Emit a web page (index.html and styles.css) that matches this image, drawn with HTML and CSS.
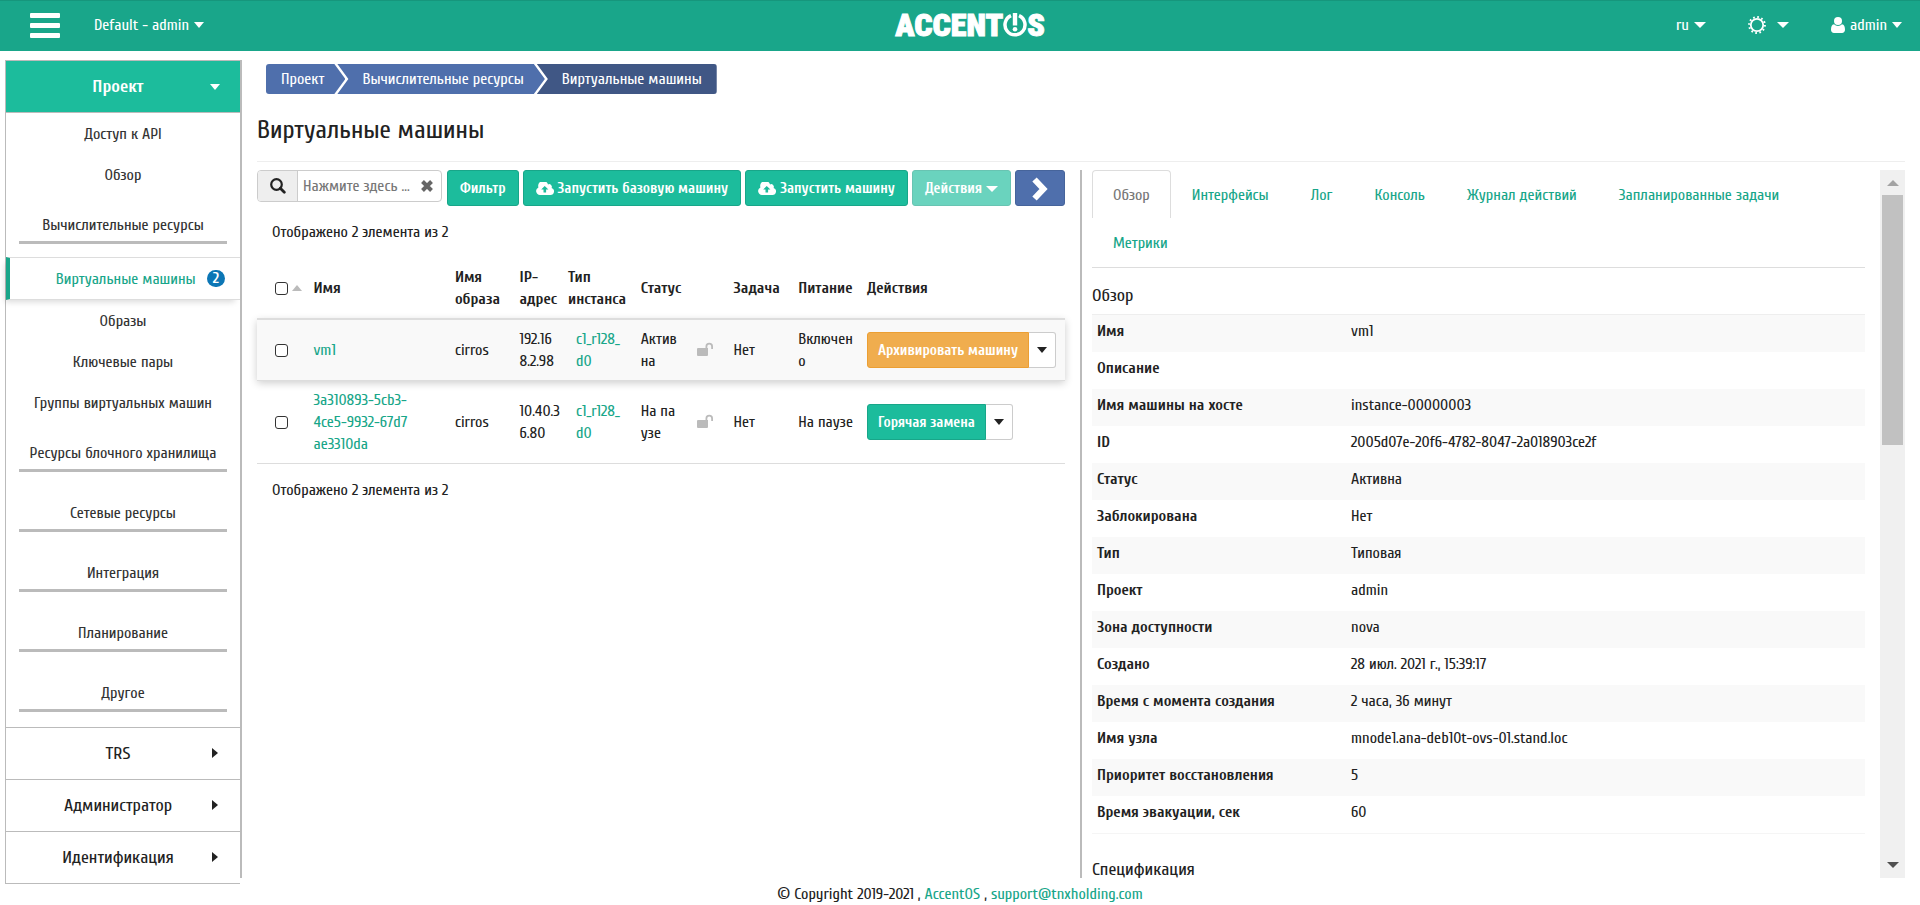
FILE: index.html
```
<!DOCTYPE html>
<html lang="ru">
<head>
    <meta charset="UTF-8">
    <meta name="viewport" content="width=device-width, initial-scale=1.0">
    <title>Виртуальные машины - AccentOS</title>
    <link rel="stylesheet" href="styles.css">
</head>
<body>
    <svg class="sprite" aria-hidden="true">
        <symbol id="cloud" viewBox="0 0 18 13">
            <path fill="currentColor" fill-rule="evenodd" d="M4 13a4 4 0 0 1-1.6-7.6A5 5 0 0 1 12 2.400a2.7 2.7 0 0 1 3.6 3.6A3.600 3.600 0 0 1 14.400 13zM8.700 4L5.200 7.600h2.300v3h2.600v-3h2.300z"/>
        </symbol>
        <symbol id="unlock" viewBox="0 0 16 14">
            <path fill="currentColor" d="M1 6h7.500V4.500a3.700 3.700 0 0 1 7.500 0V7h-1.800V4.500a1.900 1.900 0 0 0-3.900 0V6h.7v7a1 1 0 0 1-1 1H1a1 1 0 0 1-1-1V7a1 1 0 0 1 1-1z"/>
        </symbol>
    </svg>

    <header class="topbar">
        <div class="topbar-left">
            <button class="burger" aria-label="Меню"><span></span><span></span><span></span></button>
            <button class="top-link">Default - admin <i class="caret"></i></button>
        </div>
        <a class="logo" href="#" aria-label="AccentOS">ACCENT<svg width="24" height="24" viewBox="0 0 24 24">
            <path fill="none" stroke="#fff" stroke-width="3.500" d="M8 2.700a10 10 0 1 0 8 0"/>
            <path fill="#fff" d="M9.800 0h4.400v12.500H9.800z"/>
            <circle cx="12" cy="16.300" r="2.300" fill="#fff"/>
        </svg>S</a>
        <div class="topbar-right">
            <button class="top-link">ru <i class="caret caret-lg"></i></button>
            <button class="top-link top-theme" aria-label="Тема">
                <svg width="18" height="18" viewBox="0 0 18 18" fill="none" stroke="#fff">
                    <circle cx="9" cy="9" r="6.200" stroke-width="1.800"/>
                    <circle cx="9" cy="9" r="7.900" stroke-width="2" stroke-dasharray="1.700 2.436"/>
                </svg>
                <i class="caret caret-lg"></i>
            </button>
            <button class="top-link">
                <svg width="14" height="16" viewBox="0 0 14 16" fill="#fff">
                    <circle cx="7" cy="4" r="4"/>
                    <path d="M3 7.200a5.400 5.400 0 0 0 8 0c2.200.3 3 2.500 3 5.600 0 2-1.200 3.200-3 3.200H3c-1.800 0-3-1.200-3-3.200 0-3.100.8-5.300 3-5.600z"/>
                </svg>
                admin <i class="caret"></i>
            </button>
        </div>
    </header>

    <div class="page">
        <nav class="sidebar">
            <div class="panel">
                <button class="panel-title open">Проект <i class="caret"></i></button>
                <div class="panel-body">
                    <a class="item" href="#">Доступ к API</a>
                    <a class="item" href="#">Обзор</a>
                    <button class="group">Вычислительные ресурсы</button>
                    <div class="group-list">
                        <a class="item active" href="#">Виртуальные машины <span class="badge">2</span></a>
                        <a class="item" href="#">Образы</a>
                        <a class="item" href="#">Ключевые пары</a>
                        <a class="item" href="#">Группы виртуальных машин</a>
                    </div>
                    <button class="group">Ресурсы блочного хранилища</button>
                    <button class="group">Сетевые ресурсы</button>
                    <button class="group">Интеграция</button>
                    <button class="group">Планирование</button>
                    <button class="group">Другое</button>
                </div>
                <button class="panel-title">TRS <i class="caret-right"></i></button>
                <button class="panel-title">Администратор <i class="caret-right"></i></button>
                <button class="panel-title">Идентификация <i class="caret-right"></i></button>
            </div>
        </nav>

        <main class="content">
            <nav class="breadcrumb">
                <a href="#">Проект</a>
                <a href="#">Вычислительные ресурсы</a>
                <a class="current" href="#">Виртуальные машины</a>
            </nav>
            <h1>Виртуальные машины</h1>

            <div class="columns">
                <section class="list">
                    <div class="toolbar">
                        <div class="search">
                            <label for="search" aria-label="Поиск">
                                <svg width="16" height="16" viewBox="0 0 16 16" fill="none" stroke="#222">
                                    <circle cx="6.500" cy="6.500" r="5.300" stroke-width="2.200"/>
                                    <path d="M10.300 10.300l4 4" stroke-width="2.800" stroke-linecap="round"/>
                                </svg>
                            </label>
                            <input id="search" type="text" placeholder="Нажмите здесь ...">
                            <button class="clear" aria-label="Очистить">
                                <svg width="12" height="12" viewBox="0 0 12 12"><path d="M1.500 1.500l9 9M10.500 1.500l-9 9" stroke="#666" stroke-width="4"/></svg>
                            </button>
                        </div>
                        <button class="btn">Фильтр</button>
                        <button class="btn"><svg width="18" height="13"><use href="#cloud"/></svg> Запустить базовую машину</button>
                        <button class="btn"><svg width="18" height="13"><use href="#cloud"/></svg> Запустить машину</button>
                        <button class="btn" disabled>Действия <i class="caret caret-lg"></i></button>
                        <button class="btn btn-next" aria-label="Свернуть">
                            <svg width="16" height="24" viewBox="0 0 16 24"><path d="M2.500 2.500l9 9.500-9 9.500" fill="none" stroke="#fff" stroke-width="6"/></svg>
                        </button>
                    </div>
                    <p class="count">Отображено 2 элемента из 2</p>
                    <table class="instances">
                        <colgroup>
                            <col class="c-check"><col class="c-name"><col class="c-image"><col class="c-ip"><col class="c-type">
                            <col class="c-status"><col class="c-lock"><col class="c-task"><col class="c-power"><col class="c-actions">
                        </colgroup>
                        <thead>
                            <tr>
                                <th class="check"><input type="checkbox" aria-label="Выбрать все"><i class="sort"></i></th>
                                <th>Имя</th>
                                <th>Имя образа</th>
                                <th>IP-<br>адрес</th>
                                <th>Тип инстанса</th>
                                <th>Статус</th>
                                <th></th>
                                <th>Задача</th>
                                <th>Питание</th>
                                <th>Действия</th>
                            </tr>
                        </thead>
                        <tbody>
                            <tr class="selected">
                                <td class="check"><input type="checkbox" aria-label="vm1"></td>
                                <td><a href="#">vm1</a></td>
                                <td>cirros</td>
                                <td>192.16<br>8.2.98</td>
                                <td class="type"><a href="#">c1_r128_<br>d0</a></td>
                                <td>Актив<br>на</td>
                                <td class="lock"><svg width="16" height="14"><use href="#unlock"/></svg></td>
                                <td>Нет</td>
                                <td>Включен<br>о</td>
                                <td><div class="split"><button class="btn btn-warning">Архивировать машину</button><button class="btn btn-more" aria-label="Ещё"><i class="caret"></i></button></div></td>
                            </tr>
                            <tr>
                                <td class="check"><input type="checkbox" aria-label="3a310893-5cb3-4ce5-9932-67d7ae3310da"></td>
                                <td><a href="#">3a310893-5cb3-<br>4ce5-9932-67d7<br>ae3310da</a></td>
                                <td>cirros</td>
                                <td>10.40.3<br>6.80</td>
                                <td class="type"><a href="#">c1_r128_<br>d0</a></td>
                                <td>На па<br>узе</td>
                                <td class="lock"><svg width="16" height="14"><use href="#unlock"/></svg></td>
                                <td>Нет</td>
                                <td>На паузе</td>
                                <td><div class="split"><button class="btn">Горячая замена</button><button class="btn btn-more" aria-label="Ещё"><i class="caret"></i></button></div></td>
                            </tr>
                        </tbody>
                    </table>
                    <p class="count">Отображено 2 элемента из 2</p>
                </section>

                <section class="details">
                    <div class="details-body">
                        <nav class="tabs">
                            <a class="active" href="#">Обзор</a>
                            <a href="#">Интерфейсы</a>
                            <a href="#">Лог</a>
                            <a href="#">Консоль</a>
                            <a href="#">Журнал действий</a>
                            <a href="#">Запланированные задачи</a>
                            <a href="#">Метрики</a>
                        </nav>
                        <h2>Обзор</h2>
                        <dl>
                            <div><dt>Имя</dt><dd>vm1</dd></div>
                            <div><dt>Описание</dt><dd></dd></div>
                            <div><dt>Имя машины на хосте</dt><dd>instance-00000003</dd></div>
                            <div><dt>ID</dt><dd>2005d07e-20f6-4782-8047-2a018903ce2f</dd></div>
                            <div><dt>Статус</dt><dd>Активна</dd></div>
                            <div><dt>Заблокирована</dt><dd>Нет</dd></div>
                            <div><dt>Тип</dt><dd>Типовая</dd></div>
                            <div><dt>Проект</dt><dd>admin</dd></div>
                            <div><dt>Зона доступности</dt><dd>nova</dd></div>
                            <div><dt>Создано</dt><dd>28 июл. 2021 г., 15:39:17</dd></div>
                            <div><dt>Время с момента создания</dt><dd>2 часа, 36 минут</dd></div>
                            <div><dt>Имя узла</dt><dd>mnode1.ana-deb10t-ovs-01.stand.loc</dd></div>
                            <div><dt>Приоритет восстановления</dt><dd>5</dd></div>
                            <div><dt>Время эвакуации, сек</dt><dd>60</dd></div>
                        </dl>
                        <h2>Спецификация</h2>
                    </div>
                    <div class="scrollbar" aria-hidden="true">
                        <i class="arrow-up"></i>
                        <div class="track"><div class="thumb"></div></div>
                        <i class="arrow-down"></i>
                    </div>
                </section>
            </div>
        </main>
    </div>

    <footer>© Copyright 2019-2021 , <a href="#">AccentOS</a> , <a href="#">support@tnxholding.com</a></footer>
</body>
</html>
```
FILE: styles.css
```
* {
    box-sizing: border-box;
}
body {
    margin: 0;
    height: 100vh;
    display: flex;
    flex-direction: column;
    overflow: hidden;
    font-family: Cuprum, 'Roboto Condensed', Roboto, sans-serif;
    font-size: 16px;
    line-height: 22px;
    color: #222;
    background: #fff;
}
a {
    color: #18a689;
    text-decoration: none;
}
button {
    font: inherit;
    color: inherit;
    background: none;
    border: none;
    padding: 0;
    cursor: pointer;
}
.sprite {
    display: none;
}
.caret {
    display: inline-block;
    border: 5px solid transparent;
    border-top: 6px solid;
    border-bottom: 0;
    vertical-align: 2px;
}
.caret-lg {
    border-left-width: 6px;
    border-right-width: 6px;
}
.caret-right {
    display: inline-block;
    border: 5px solid transparent;
    border-left: 6px solid;
    border-right: 0;
}

/* header */
.topbar {
    flex: none;
    height: 51px;
    display: flex;
    align-items: center;
    justify-content: space-between;
    padding: 0 18px 2px 30px;
    background: #19a68a;
    border-top: 1px solid #16967c;
    color: #fff;
}
.topbar-left, .topbar-right {
    flex: 1;
    display: flex;
    align-items: center;
}
.topbar-right {
    justify-content: flex-end;
    gap: 42px;
}
.topbar-left {
    gap: 34px;
}
.burger {
    display: flex;
    flex-direction: column;
    gap: 5px;
    width: 30px;
}
.burger span {
    height: 5px;
    border-radius: 1px;
    background: #fff;
}
.top-link {
    display: flex;
    align-items: center;
    gap: 5px;
    font-weight: 500;
}
.top-theme {
    gap: 11px;
}
.logo {
    display: flex;
    align-items: center;
    margin-left: 8px;
    font-family: 'Roboto Condensed', 'Liberation Sans', sans-serif;
    font-size: 32px;
    font-weight: 900;
    color: #fff;
    -webkit-text-stroke: 1px #fff;
}

/* sidebar */
.page {
    flex: 1;
    min-height: 0;
    display: flex;
    margin-top: 9px;
}
.sidebar {
    flex: none;
    width: 242px;
    padding-left: 5px;
    border-right: 2px solid #bbb;
}
.panel {
    border: 1px solid #bbb;
    border-right: none;
}
.panel-title {
    display: block;
    position: relative;
    width: 100%;
    height: 52px;
    padding-right: 10px;
    border-top: 1px solid #bbb;
    font-size: 18px;
    font-weight: 500;
    text-align: center;
}
.panel-title.open {
    background: #1cbc9c;
    border-top: none;
    border-bottom: 1px solid #bbb;
    color: #fff;
    font-weight: 700;
}
.panel-title i {
    position: absolute;
    right: 20px;
    top: 23px;
}
.panel-title .caret-right {
    right: 22px;
    top: 20px;
}
.panel-body {
    padding-bottom: 4px;
}
.item {
    display: block;
    padding: 10px 10px 9px;
    text-align: center;
    color: #333;
}
.item.active {
    display: flex;
    justify-content: flex-end;
    align-items: center;
    gap: 11px;
    height: 43px;
    padding: 0 15px 0 0;
    border-top: 1px solid #ddd;
    border-bottom: 1px solid #ddd;
    border-left: 4px solid #19a68a;
    box-shadow: -3px 4px 6px -2px rgba(0, 0, 0, 0.15);
    color: #19a68a;
}
.badge {
    padding: 0 6px;
    border-radius: 9px;
    background: #0c76b5;
    color: #fff;
    font-size: 15px;
    font-weight: 700;
    line-height: 17px;
}
.group {
    display: block;
    width: calc(100% - 26px);
    margin: 0 13px 11px;
    padding: 19px 0 5px;
    border-bottom: 3px solid #bbb;
    color: #333;
    white-space: nowrap;
}
.group-list {
    padding-top: 2px;
}

/* content */
.content {
    flex: 1;
    min-width: 0;
    display: flex;
    flex-direction: column;
    padding: 0 15px;
}
.breadcrumb {
    display: flex;
    margin: 4px 0 0 9px;
    font-weight: 500;
}
.breadcrumb a {
    height: 30px;
    padding: 4px 21px 4px 25px;
    margin-left: -8px;
    background: #4f6fac;
    color: #fff;
    clip-path: polygon(0 0, calc(100% - 11px) 0, 100% 50%, calc(100% - 11px) 100%, 0 100%, 11px 50%);
}
.breadcrumb a:first-child {
    margin-left: 0;
    padding-left: 15px;
    border-radius: 3px 0 0 3px;
    clip-path: polygon(0 0, calc(100% - 11px) 0, 100% 50%, calc(100% - 11px) 100%, 0 100%);
}
.breadcrumb a.current {
    padding-right: 15px;
    border-radius: 0 3px 3px 0;
    background: #405785;
    clip-path: polygon(0 0, 100% 0, 100% 100%, 0 100%, 11px 50%);
}
h1 {
    margin: 21px 0 8px;
    padding-bottom: 16px;
    border-bottom: 1px solid #eee;
    font-size: 26px;
    font-weight: 400;
    line-height: 30px;
}
.columns {
    flex: 1;
    min-height: 0;
    display: flex;
}
.list {
    flex: none;
    width: calc(50% - 1px);
    padding-right: 15px;
}
.toolbar {
    display: flex;
    align-items: flex-start;
    gap: 4px;
}
.search {
    flex: 1;
    min-width: 0;
    display: flex;
    height: 32px;
    margin-right: 1px;
    border: 1px solid #ccc;
    border-radius: 4px;
}
.search label {
    flex: none;
    display: flex;
    align-items: center;
    justify-content: center;
    width: 40px;
    border-right: 1px solid #ccc;
    border-radius: 3px 0 0 3px;
    background: #eee;
}
.search input {
    flex: 1;
    min-width: 0;
    border: none;
    padding: 0 5px;
    background: none;
    font: inherit;
}
.search input::placeholder {
    color: #777;
    opacity: 1;
}
.clear {
    display: flex;
    align-items: center;
    padding-right: 8px;
}
.btn {
    display: flex;
    align-items: center;
    justify-content: center;
    gap: 4px;
    flex: none;
    height: 36px;
    padding: 1px 12px 0;
    border: 1px solid #18a689;
    border-radius: 3px;
    background: #1cbc9c;
    color: #fff;
    font-size: 15px;
    font-weight: 700;
    white-space: nowrap;
}
.btn:disabled {
    opacity: 0.65;
}
.btn-next {
    width: 50px;
    background: #4f6fac;
    border-color: #46649b;
}
.count {
    margin: 15px 15px 13px;
}

.instances {
    width: 100%;
    table-layout: fixed;
    border-collapse: collapse;
}
.c-check { width: 6%; }
.c-name { width: 17.5%; }
.c-image { width: 8%; }
.c-ip { width: 6%; }
.c-type { width: 9%; }
.c-status { width: 7%; }
.c-lock { width: 4.5%; }
.c-task { width: 8%; }
.c-power { width: 8.5%; }
.c-actions { width: 25.5%; }
.instances th, .instances td {
    padding: 8px 0 8px 8px;
    text-align: left;
    border-bottom: 1px solid #ddd;
    white-space: nowrap;
}
.instances th {
    height: 63px;
    padding: 9px 0 7px 8px;
    border-bottom-width: 2px;
    font-weight: 700;
    white-space: normal;
}
.instances th.check, .instances td.check {
    padding-left: 18px;
}
.instances input {
    appearance: none;
    width: 13px;
    height: 13px;
    margin: 0;
    border: 1px solid #333;
    border-radius: 3px;
    background: #fff;
    vertical-align: -2px;
}
.instances input:checked {
    background: #19a68a;
}
.instances td.type {
    padding-left: 16px;
}
.instances .selected {
    background: #f9f9f9;
    box-shadow: 0 2px 8px rgba(0, 0, 0, 0.2);
}
.sort {
    display: inline-block;
    margin-left: 4px;
    border: 5px solid transparent;
    border-bottom: 6px solid #bbb;
    border-top: 0;
    vertical-align: 2px;
}
.lock svg {
    color: #bbb;
    vertical-align: -1px;
}
.split {
    display: flex;
}
.split .btn {
    padding: 1px 10px 0;
    border-radius: 3px 0 0 3px;
}
.btn-warning {
    background: #f0ad4e;
    border-color: #ec9f33;
}
.split .btn-more {
    width: 27px;
    padding: 0;
    border-color: #ccc;
    border-left: none;
    border-radius: 0 3px 3px 0;
    background: #fff;
    color: #222;
}

/* details panel */
.details {
    flex: 1;
    min-width: 0;
    display: flex;
    gap: 15px;
    border-left: 2px solid #bbb;
}
.details-body {
    flex: 1;
    min-width: 0;
    padding-left: 10px;
    overflow: hidden;
}
.tabs {
    display: flex;
    flex-wrap: wrap;
    padding-bottom: 1px;
    border-bottom: 1px solid #ddd;
    font-weight: 500;
}
.tabs a {
    height: 48px;
    padding: 13px 20px;
    border: 1px solid transparent;
}
.tabs a.active {
    border-color: #ddd;
    border-bottom: none;
    border-radius: 4px 4px 0 0;
    color: #777;
    font-weight: 400;
}
h2 {
    margin: 17px 0 7px;
    font-size: 18px;
    font-weight: 500;
    line-height: 22px;
}
dl {
    margin: 0 0 25px;
    border-top: 1px solid #eee;
    border-bottom: 1px solid #f5f5f5;
}
dl div {
    display: flex;
    height: 37px;
    padding: 5px;
}
dl div:nth-child(odd) {
    background: #f9f9f9;
}
dt {
    width: 33.3%;
    font-weight: 700;
}
dd {
    margin: 0;
}
.scrollbar {
    flex: none;
    width: 25px;
    display: flex;
    flex-direction: column;
    align-items: center;
    background: #f0f0f0;
}
.track {
    flex: 1;
    width: 21px;
    margin: 9px 0;
}
.thumb {
    height: 38%;
    background: #c1c1c1;
}
.arrow-up, .arrow-down {
    margin: 10px 0 0;
    border: 6px solid transparent;
}
.arrow-up {
    border-bottom-color: #a3a3a3;
    border-top: 0;
}
.arrow-down {
    margin: 0 0 10px;
    border-top-color: #505050;
    border-bottom: 0;
}

footer {
    flex: none;
    height: 27px;
    padding-top: 5px;
    text-align: center;
}
footer a {
    font-weight: 500;
}
```
